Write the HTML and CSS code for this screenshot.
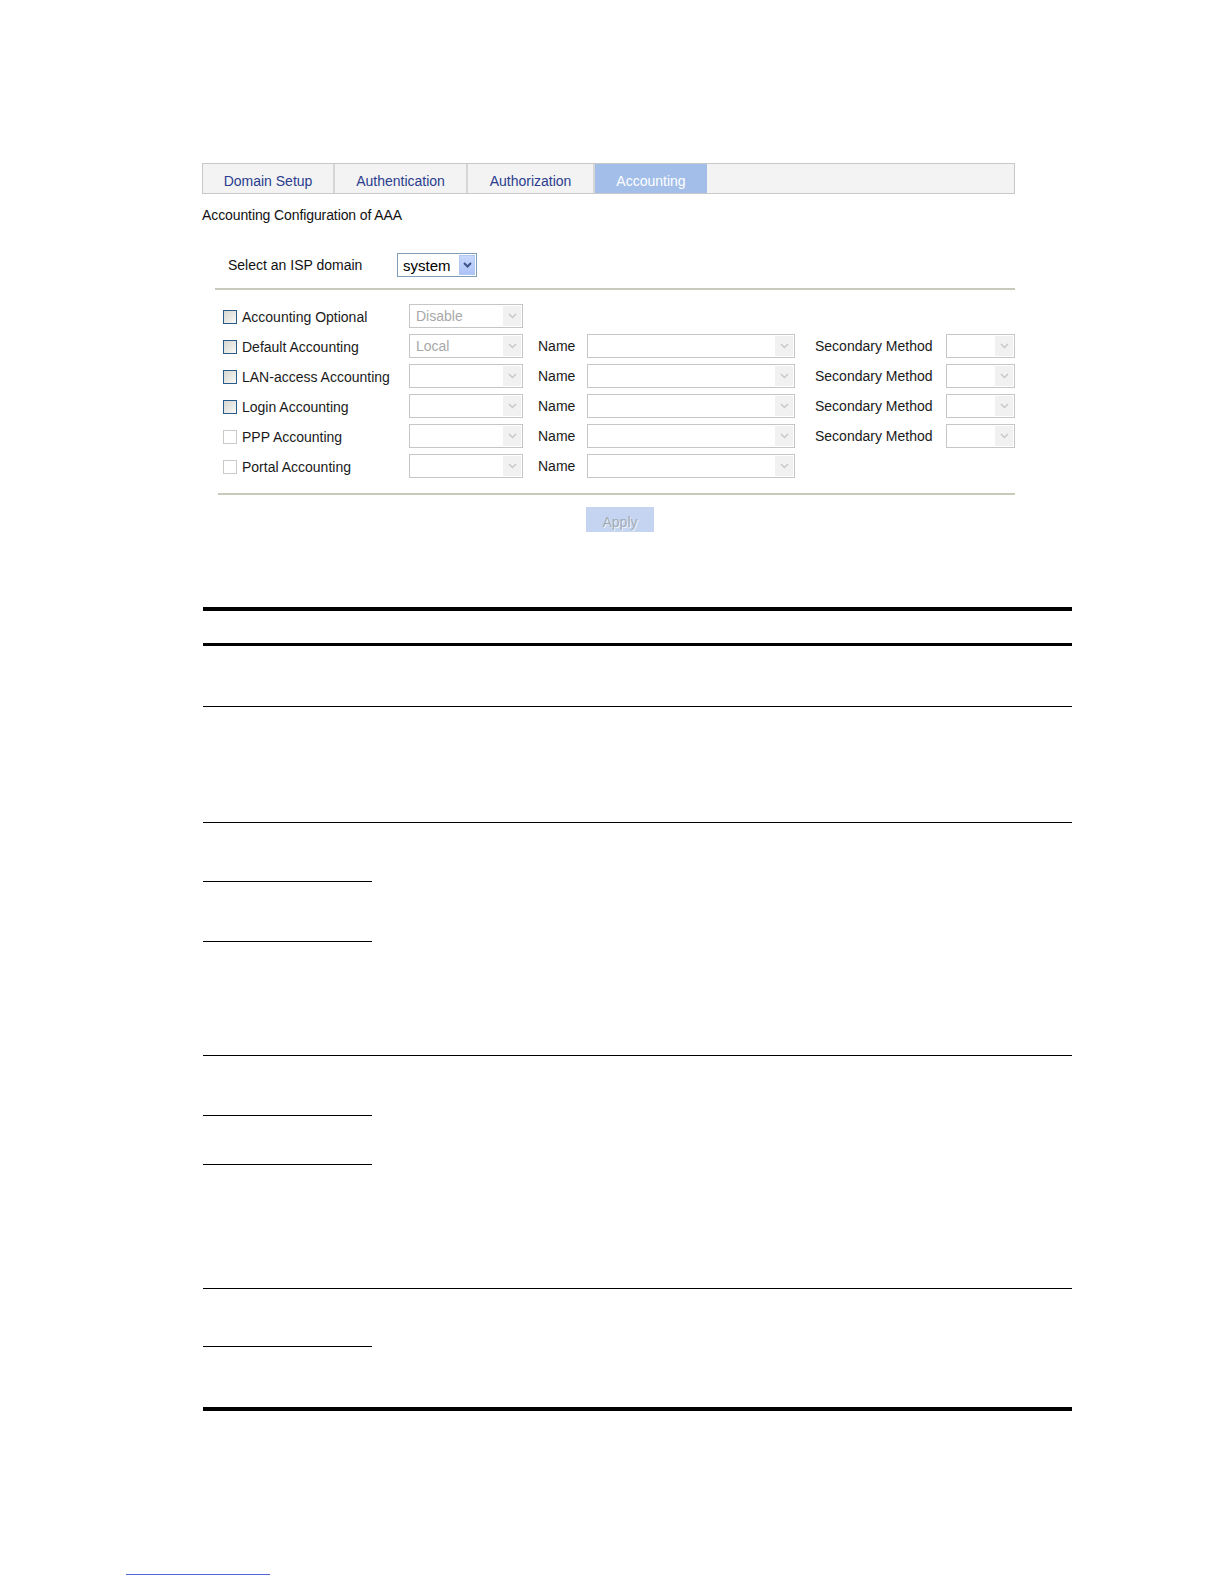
FILE: index.html
```html
<!DOCTYPE html>
<html lang="en">
<head>
<meta charset="utf-8">
<title>Accounting Configuration of AAA</title>
<link rel="stylesheet" href="styles.css">
</head>
<body>
<div class="page">
  <div class="panel">
    <div class="tabs">
      <div class="tab t1">Domain Setup</div>
      <div class="tab t2">Authentication</div>
      <div class="tab t3">Authorization</div>
      <div class="tab active">Accounting</div>
    </div>
    <div class="title">Accounting Configuration of AAA</div>
    <div class="isp-row">
      <span class="isp-label">Select an ISP domain</span>
      <div class="sel isp">
        <span class="val">system</span>
        <span class="arr"><svg width="9" height="6" viewBox="0 0 9 6"><polyline points="1,1 4.5,4.5 8,1" fill="none" stroke="#3d5288" stroke-width="2"/></svg></span>
      </div>
    </div>
    <div class="sep sep1"></div>
    <div class="rows">
      <label class="chk"><span class="box on"></span>Accounting Optional</label>
      <div class="sel dis"><span class="val">Disable</span><span class="arr"><svg width="9" height="6" viewBox="0 0 9 6"><polyline points="1,1 4.5,4.5 8,1" fill="none" stroke="#c8c8c8" stroke-width="1.5"/></svg></span></div>
      <span></span><span></span><span></span><span></span>

      <label class="chk"><span class="box on"></span>Default Accounting</label>
      <div class="sel dis"><span class="val">Local</span><span class="arr"><svg width="9" height="6" viewBox="0 0 9 6"><polyline points="1,1 4.5,4.5 8,1" fill="none" stroke="#c8c8c8" stroke-width="1.5"/></svg></span></div>
      <span class="lbl name">Name</span>
      <div class="sel dis"><span class="val"></span><span class="arr"><svg width="9" height="6" viewBox="0 0 9 6"><polyline points="1,1 4.5,4.5 8,1" fill="none" stroke="#c8c8c8" stroke-width="1.5"/></svg></span></div>
      <span class="lbl sec">Secondary Method</span>
      <div class="sel dis"><span class="val"></span><span class="arr"><svg width="9" height="6" viewBox="0 0 9 6"><polyline points="1,1 4.5,4.5 8,1" fill="none" stroke="#c8c8c8" stroke-width="1.5"/></svg></span></div>

      <label class="chk"><span class="box on"></span>LAN-access Accounting</label>
      <div class="sel dis"><span class="val"></span><span class="arr"><svg width="9" height="6" viewBox="0 0 9 6"><polyline points="1,1 4.5,4.5 8,1" fill="none" stroke="#c8c8c8" stroke-width="1.5"/></svg></span></div>
      <span class="lbl name">Name</span>
      <div class="sel dis"><span class="val"></span><span class="arr"><svg width="9" height="6" viewBox="0 0 9 6"><polyline points="1,1 4.5,4.5 8,1" fill="none" stroke="#c8c8c8" stroke-width="1.5"/></svg></span></div>
      <span class="lbl sec">Secondary Method</span>
      <div class="sel dis"><span class="val"></span><span class="arr"><svg width="9" height="6" viewBox="0 0 9 6"><polyline points="1,1 4.5,4.5 8,1" fill="none" stroke="#c8c8c8" stroke-width="1.5"/></svg></span></div>

      <label class="chk"><span class="box on"></span>Login Accounting</label>
      <div class="sel dis"><span class="val"></span><span class="arr"><svg width="9" height="6" viewBox="0 0 9 6"><polyline points="1,1 4.5,4.5 8,1" fill="none" stroke="#c8c8c8" stroke-width="1.5"/></svg></span></div>
      <span class="lbl name">Name</span>
      <div class="sel dis"><span class="val"></span><span class="arr"><svg width="9" height="6" viewBox="0 0 9 6"><polyline points="1,1 4.5,4.5 8,1" fill="none" stroke="#c8c8c8" stroke-width="1.5"/></svg></span></div>
      <span class="lbl sec">Secondary Method</span>
      <div class="sel dis"><span class="val"></span><span class="arr"><svg width="9" height="6" viewBox="0 0 9 6"><polyline points="1,1 4.5,4.5 8,1" fill="none" stroke="#c8c8c8" stroke-width="1.5"/></svg></span></div>

      <label class="chk"><span class="box off"></span>PPP Accounting</label>
      <div class="sel dis"><span class="val"></span><span class="arr"><svg width="9" height="6" viewBox="0 0 9 6"><polyline points="1,1 4.5,4.5 8,1" fill="none" stroke="#c8c8c8" stroke-width="1.5"/></svg></span></div>
      <span class="lbl name">Name</span>
      <div class="sel dis"><span class="val"></span><span class="arr"><svg width="9" height="6" viewBox="0 0 9 6"><polyline points="1,1 4.5,4.5 8,1" fill="none" stroke="#c8c8c8" stroke-width="1.5"/></svg></span></div>
      <span class="lbl sec">Secondary Method</span>
      <div class="sel dis"><span class="val"></span><span class="arr"><svg width="9" height="6" viewBox="0 0 9 6"><polyline points="1,1 4.5,4.5 8,1" fill="none" stroke="#c8c8c8" stroke-width="1.5"/></svg></span></div>

      <label class="chk"><span class="box off"></span>Portal Accounting</label>
      <div class="sel dis"><span class="val"></span><span class="arr"><svg width="9" height="6" viewBox="0 0 9 6"><polyline points="1,1 4.5,4.5 8,1" fill="none" stroke="#c8c8c8" stroke-width="1.5"/></svg></span></div>
      <span class="lbl name">Name</span>
      <div class="sel dis"><span class="val"></span><span class="arr"><svg width="9" height="6" viewBox="0 0 9 6"><polyline points="1,1 4.5,4.5 8,1" fill="none" stroke="#c8c8c8" stroke-width="1.5"/></svg></span></div>
      <span></span><span></span>
    </div>
    <div class="sep sep2"></div>
    <div class="actions">
      <button class="apply" type="button" disabled>Apply</button>
    </div>
  </div>

  <div class="doc">
    <div class="doc-head"></div>
    <div class="doc-row r1"></div>
    <div class="doc-row r2"></div>
    <div class="doc-group">
      <div class="col1">
        <div class="cell h58"></div>
        <div class="cell h59"></div>
        <div class="cell last h113"></div>
      </div>
      <div class="col2"></div>
    </div>
    <div class="doc-group">
      <div class="col1">
        <div class="cell h59"></div>
        <div class="cell h48"></div>
        <div class="cell last h123"></div>
      </div>
      <div class="col2"></div>
    </div>
    <div class="doc-group final">
      <div class="col1">
        <div class="cell h57"></div>
        <div class="cell last h60"></div>
      </div>
      <div class="col2"></div>
    </div>
  </div>

  <div class="foot-link"></div>
</div>
</body>
</html>
```

FILE: styles.css
```css
html, body {
  margin: 0;
  padding: 0;
  background: #ffffff;
}

body {
  font-family: "Liberation Sans", Arial, sans-serif;
  font-size: 14px;
  color: #111;
}

.page {
  padding-top: 163px;
  padding-bottom: 10px;
}

.panel {
  margin-left: 202px;
  width: 813px;
}

/* tabs */
.tabs {
  display: flex;
  height: 29px;
  border: 1px solid #c8c8c8;
  background: #f3f3f3;
}

.tab {
  box-sizing: border-box;
  height: 29px;
  padding-top: 6px;
  line-height: 23px;
  text-align: center;
  color: #2b3d8f;
  border-right: 2px solid #d6d6d6;
}

.t1 { width: 132px; }
.t2 { width: 133px; }
.t3 { width: 127px; }

.tab.active {
  width: 112px;
  border-right: none;
  background: #a2bee9;
  color: #ffffff;
}

.title {
  padding-top: 12px;
  line-height: 18px;
  color: #111;
  letter-spacing: -0.1px;
}

/* ISP */
.isp-row {
  margin-top: 29px;
  display: flex;
  align-items: center;
  height: 24px;
  padding-left: 26px;
}

.isp-label {
  width: 169px;
  color: #111;
}

/* selects */
.sel {
  box-sizing: border-box;
  display: flex;
  height: 24px;
  border: 1px solid #c6c6c6;
  background: #ffffff;
}

.sel .val {
  flex: 1;
  padding-left: 6px;
  line-height: 22px;
  color: #a8a8a8;
  white-space: nowrap;
  overflow: hidden;
}

.sel .arr {
  width: 18px;
  margin: 1px;
  background: #f1f1f1;
  display: flex;
  align-items: center;
  justify-content: center;
}

.sel.isp {
  width: 80px;
  border-color: #7f9db9;
}

.sel.isp .val {
  color: #000;
  padding-left: 5px;
  font-size: 15px;
  line-height: 23px;
}

.sel.isp .arr {
  width: 16px;
  margin: 1px 1px 1px 0;
  background: linear-gradient(#c8d8fd, #adc3f6);
  border: 1px solid #b3c7f3;
  box-sizing: border-box;
}

/* separators */
.sep {
  height: 0;
  border-top: 2px solid #cacabc;
}

.sep1 {
  margin-top: 11px;
  margin-left: 13px;
}

.sep2 {
  margin-top: 15px;
  margin-left: 16px;
}

/* form rows */
.rows {
  margin-top: 14px;
  padding-left: 21px;
  display: grid;
  grid-template-columns: 186px 114px 64px 208px 151px 69px;
  grid-auto-rows: 24px;
  row-gap: 6px;
}

.chk {
  display: flex;
  align-items: center;
  gap: 5px;
  padding-top: 1px;
  color: #1a1a1a;
  white-space: nowrap;
}

.box {
  box-sizing: border-box;
  width: 14px;
  height: 14px;
  flex: none;
}

.box.on {
  border: 1px solid #2a5a8c;
  background: linear-gradient(135deg, #d8d8d2 0%, #ebebe6 60%, #f9f9f7 100%);
}

.box.off {
  border: 1px solid #cbcbc5;
  background: #ffffff;
}

.lbl {
  display: flex;
  align-items: center;
  color: #1a1a1a;
  white-space: nowrap;
}

.lbl.name { padding-left: 15px; }
.lbl.sec { padding-left: 20px; }

/* apply */
.actions {
  margin-top: 12px;
  display: flex;
  padding-left: 384px;
}

.apply {
  width: 68px;
  height: 25px;
  border: none;
  padding: 5px 0 0 0;
  background: #c5d5f1;
  color: #a3acb6;
  font-family: "Liberation Sans", Arial, sans-serif;
  font-size: 14px;
  text-shadow: 1px 1px 0 #eef3fb;
}

/* document table */
.doc {
  margin-top: 75px;
  margin-left: 203px;
  width: 869px;
  border-top: 4px solid #000;
  border-bottom: 4px solid #000;
}

.doc-head {
  height: 32px;
  border-bottom: 3px solid #000;
}

.doc-row {
  border-bottom: 1px solid #000;
}

.r1 { height: 60px; }
.r2 { height: 115px; }

.doc-group {
  display: flex;
  border-bottom: 1px solid #000;
}

.doc-group.final {
  border-bottom: none;
}

.col1 {
  width: 169px;
}

.col2 {
  flex: 1;
}

.cell {
  border-bottom: 1px solid #000;
}

.cell.last {
  border-bottom: none;
}

.h48 { height: 48px; }
.h57 { height: 57px; }
.h58 { height: 58px; }
.h59 { height: 59px; }
.h60 { height: 60px; }
.h113 { height: 113px; }
.h123 { height: 123px; }

.foot-link {
  margin-top: 163px;
  margin-left: 126px;
  width: 144px;
  height: 1px;
  background: #5066d6;
}
```
